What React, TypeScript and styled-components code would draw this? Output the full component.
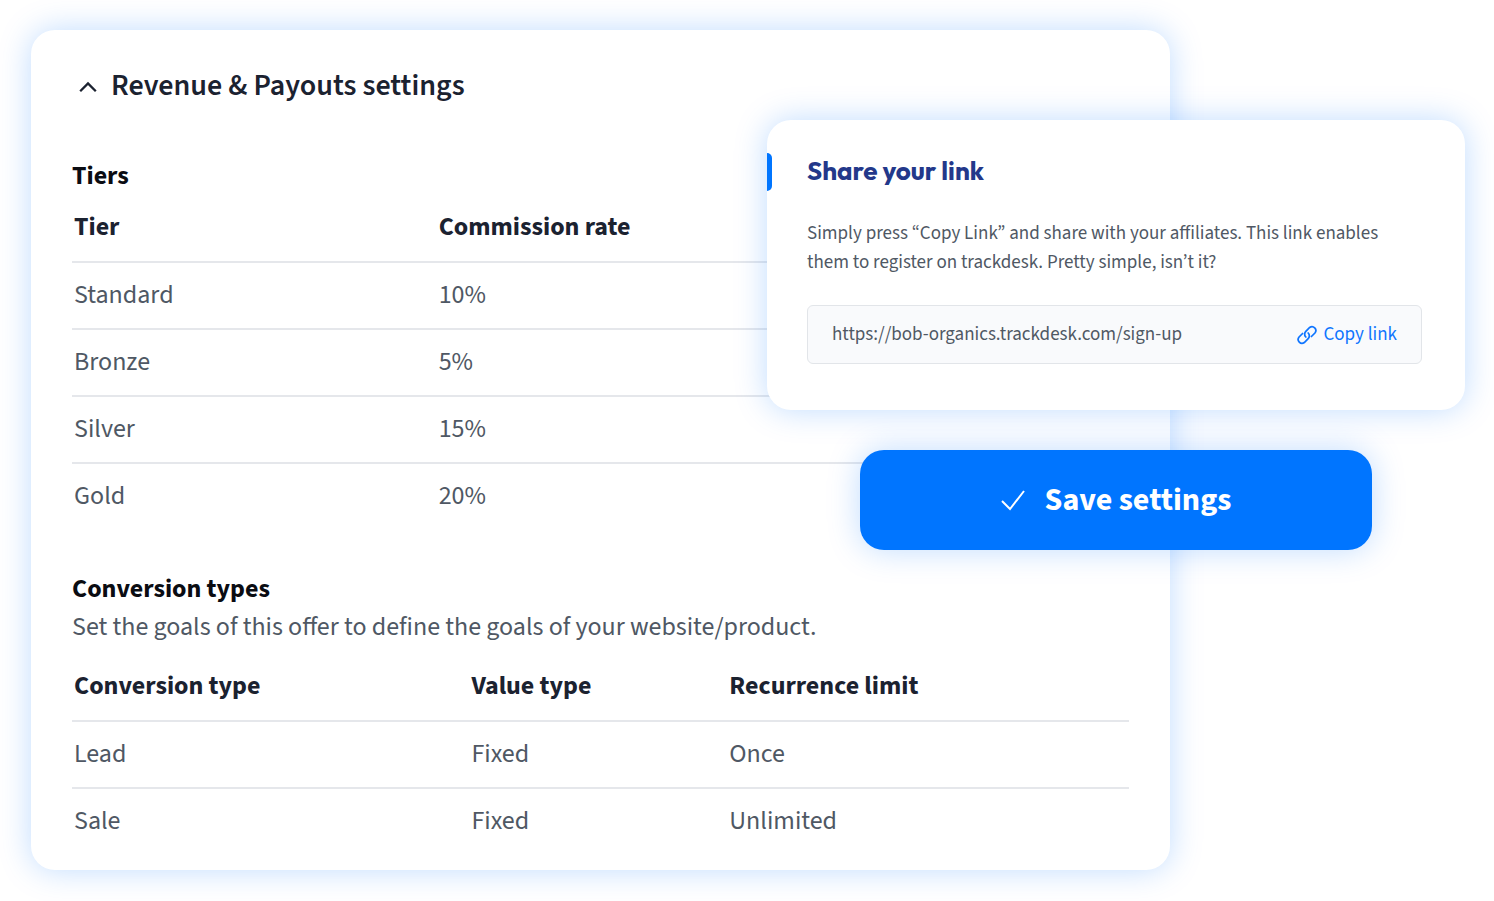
import React from 'react';
import styled, { createGlobalStyle } from 'styled-components';

const GlobalStyle = createGlobalStyle`
  *, *::before, *::after { box-sizing: border-box; }
  body {
    margin: 0;
    background: #fff;
    color: #4f5864;
    font-family: 'Source Sans 3', 'Noto Sans CJK KR', sans-serif;
    font-size: 26px;
    line-height: 38px;
  }
  h2, h3, p { margin: 0; font-size: inherit; }
  button, input { font: inherit; color: inherit; }
`;

const GLOW = '0 0 32px rgba(0, 117, 255, 0.25)';

const Page = styled.main`
  padding: 30px 29px 31px 31px;
`;

const Stage = styled.div`
  position: relative;
`;

const Panel = styled.section`
  margin-right: 295px;
  padding: 36px 41px 16px;
  border-radius: 24px;
  background: #fff;
  box-shadow: ${GLOW};
`;

const PanelTitle = styled.h2`
  display: flex;
  line-height: 40px;
`;

const Toggle = styled.button`
  display: flex;
  align-items: center;
  gap: 14px;
  padding: 0 0 0 7px;
  border: 0;
  background: none;
  color: #1b2230;
  font-size: 30px;
  font-weight: 600;
  cursor: pointer;
`;

const Section = styled.section<{ $top: number }>`
  padding-top: ${(p) => p.$top}px;
`;

const SectionTitle = styled.h3`
  color: #0a0c12;
  font-weight: 700;
`;

const Table = styled.table<{ $gap: number }>`
  width: 100%;
  margin-top: ${(p) => p.$gap}px;
  border-collapse: separate;
  border-spacing: 0;
  table-layout: fixed;
  text-align: left;
`;

const Cell = styled.td`
  height: 67px;
  padding: 0 2px 2px;
  border-top: 2px solid #e5e7eb;
`;

const HeadCell = styled.th<{ $width?: string }>`
  width: ${(p) => p.$width ?? 'auto'};
  height: 66px;
  padding: 0 2px 2px;
  color: #1b2230;
  font-weight: 700;
`;

const Overlay = styled.div`
  position: absolute;
  top: 90px;
  right: 0;
  display: flex;
  flex-direction: column;
  gap: 40px;
  width: 698px;
  max-width: 100%;
`;

const ShareCard = styled.section`
  display: flex;
  flex-direction: column;
  padding: 33px 43px 46px 0;
  border-radius: 24px;
  background: #fff;
  box-shadow: ${GLOW};
`;

const ShareHeader = styled.div`
  display: flex;
  align-items: flex-start;
  gap: 35px;
`;

const Marker = styled.span`
  width: 5px;
  height: 38px;
  border-radius: 0 5px 5px 0;
  background: #0075ff;
`;

const ShareTitle = styled.h3`
  color: #23388a;
  font-family: Outfit, Lato, sans-serif;
  font-weight: 700;
  line-height: 36px;
`;

const ShareBody = styled.div`
  display: flex;
  flex-direction: column;
  gap: 28px;
  padding: 28px 0 0 40px;
  font-size: 19px;
  line-height: 29px;
`;

const LinkBox = styled.div`
  display: flex;
  align-items: center;
  gap: 24px;
  height: 59px;
  padding: 0 24px;
  border: 1px solid #e2e5e9;
  border-radius: 6px;
  background: #f9fafc;
`;

const LinkInput = styled.input`
  flex: 1;
  min-width: 0;
  padding: 0;
  border: 0;
  outline: 0;
  background: none;
`;

const CopyButton = styled.button`
  display: flex;
  align-items: center;
  gap: 6px;
  padding: 0;
  border: 0;
  background: none;
  color: #0f75ff;
  cursor: pointer;
`;

const SaveButton = styled.button`
  display: flex;
  align-items: center;
  justify-content: center;
  align-self: flex-end;
  gap: 20px;
  width: 512px;
  max-width: 100%;
  height: 100px;
  margin-right: 93px;
  border: 0;
  border-radius: 24px;
  background: #0075ff;
  box-shadow: ${GLOW};
  color: #fff;
  font-size: 32px;
  font-weight: 700;
  cursor: pointer;
`;

const ChevronIcon = () => (
  <svg width="18" height="14" viewBox="0 0 18 14" fill="none" stroke="currentColor" strokeWidth="2.3" aria-hidden="true">
    <path d="M1.2 12.3 9 4.5l7.8 7.8" />
  </svg>
);

const ChainIcon = () => (
  <svg width="20" height="20" viewBox="0 0 24 24" fill="none" stroke="currentColor" strokeWidth="2.1" strokeLinecap="round" aria-hidden="true">
    <path d="M10.6 14.4a4.8 4.8 0 0 1 0-6.8l4.6-4.6a4.6 4.6 0 0 1 6.3 6.6l-4.2 4.2" />
    <path d="M13.4 9.6a4.8 4.8 0 0 1 0 6.8l-4.6 4.6a4.6 4.6 0 0 1-6.3-6.6l4.2-4.2" />
  </svg>
);

const CheckIcon = () => (
  <svg width="24" height="22" viewBox="0 0 24 22" fill="none" stroke="currentColor" strokeWidth="2" aria-hidden="true">
    <path d="M1 12l8 8L23 2" />
  </svg>
);

interface DataTableProps {
  gap: number;
  label: string;
  columns: { title: string; width?: string }[];
  rows: string[][];
}

const DataTable = ({ gap, label, columns, rows }: DataTableProps) => (
  <Table $gap={gap} aria-label={label}>
    <thead>
      <tr>
        {columns.map((c) => (
          <HeadCell key={c.title} scope="col" $width={c.width}>{c.title}</HeadCell>
        ))}
      </tr>
    </thead>
    <tbody>
      {rows.map((row) => (
        <tr key={row[0]}>
          {row.map((value, i) => <Cell key={i}>{value}</Cell>)}
        </tr>
      ))}
    </tbody>
  </Table>
);

export default function App() {
  return (
    <Page>
      <GlobalStyle />
      <Stage>
        <Panel>
          <PanelTitle>
            <Toggle type="button" aria-expanded="true">
              <ChevronIcon />
              Revenue &amp; Payouts settings
            </Toggle>
          </PanelTitle>
          <Section $top={51}>
            <SectionTitle>Tiers</SectionTitle>
            <DataTable
              gap={0}
              label="Tiers"
              columns={[{ title: 'Tier', width: '34.5%' }, { title: 'Commission rate' }]}
              rows={[['Standard', '10%'], ['Bronze', '5%'], ['Silver', '15%'], ['Gold', '20%']]}
            />
          </Section>
          <Section $top={41}>
            <SectionTitle>Conversion types</SectionTitle>
            <p>Set the goals of this offer to define the goals of your website/product.</p>
            <DataTable
              gap={8}
              label="Conversion types"
              columns={[
                { title: 'Conversion type', width: '37.6%' },
                { title: 'Value type', width: '24.4%' },
                { title: 'Recurrence limit' },
              ]}
              rows={[['Lead', 'Fixed', 'Once'], ['Sale', 'Fixed', 'Unlimited']]}
            />
          </Section>
        </Panel>
        <Overlay>
          <ShareCard>
            <ShareHeader>
              <Marker />
              <ShareTitle>Share your link</ShareTitle>
            </ShareHeader>
            <ShareBody>
              <p>
                Simply press “Copy Link” and share with your affiliates. This link enables them to
                register on trackdesk. Pretty simple, isn’t it?
              </p>
              <LinkBox>
                <LinkInput readOnly aria-label="Sign-up link" value="https://bob-organics.trackdesk.com/sign-up" />
                <CopyButton type="button">
                  <ChainIcon />
                  Copy link
                </CopyButton>
              </LinkBox>
            </ShareBody>
          </ShareCard>
          <SaveButton type="button">
            <CheckIcon />
            Save settings
          </SaveButton>
        </Overlay>
      </Stage>
    </Page>
  );
}
